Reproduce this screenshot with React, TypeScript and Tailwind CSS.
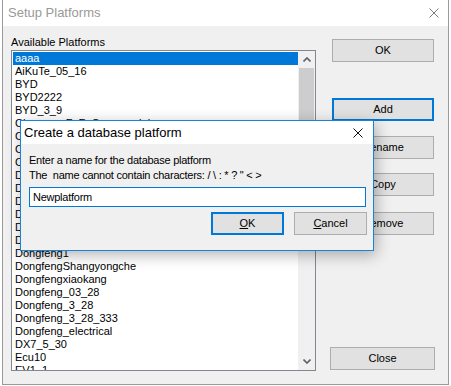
const platforms = [
  "aaaa",
  "AiKuTe_05_16",
  "BYD",
  "BYD2222",
  "BYD_3_9",
  "Changan_F_F_Commercial",
  "Chery",
  "Chery_QQ",
  "Chery_test",
  "DFLZ",
  "DFM",
  "Demo",
  "Dongfeng",
  "Dongfeng0",
  "Dongfeng01",
  "Dongfeng1",
  "DongfengShangyongche",
  "Dongfengxiaokang",
  "Dongfeng_03_28",
  "Dongfeng_3_28",
  "Dongfeng_3_28_333",
  "Dongfeng_electrical",
  "DX7_5_30",
  "Ecu10",
  "EV1_1",
];

function CloseGlyph({ color }: { color: string }) {
  return (
    <svg width="10" height="10" viewBox="0 0 10 10">
      <path d="M0.5 0.5 L9.5 9.5 M9.5 0.5 L0.5 9.5" stroke={color} strokeWidth="1" fill="none" />
    </svg>
  );
}

function Chevron({ up }: { up?: boolean }) {
  return (
    <svg width="8" height="5" viewBox="0 0 8 5">
      <path
        d={up ? "M0.5 4.5 L4 1 L7.5 4.5" : "M0.5 0.5 L4 4 L7.5 0.5"}
        stroke="#606060"
        strokeWidth="1.6"
        fill="none"
      />
    </svg>
  );
}

function WinButton({ label, focused, className = "" }: { label: string; focused?: boolean; className?: string }) {
  return (
    <div
      className={`flex h-[23px] w-[102px] items-center justify-center bg-[#e1e1e1] text-[11px] text-black ${
        focused ? "border-2 border-[#0078d7]" : "border border-[#adadad]"
      } ${className}`}
    >
      {label}
    </div>
  );
}

export default function App() {
  return (
    <div
      className="relative h-[386px] w-[451px] overflow-hidden bg-white pl-[2px]"
      style={{ fontFamily: '"Liberation Sans", Arial, sans-serif' }}
    >
      <div className="flex h-[385px] w-[447px] flex-col border-x border-b border-[#9a9a9a]">
        {/* title bar */}
        <div className="flex h-[26px] items-center justify-between bg-white pl-[5px] pr-[9px]">
          <span className="text-[13px] text-[#999999]">Setup Platforms</span>
          <CloseGlyph color="#7a7a7a" />
        </div>

        {/* client */}
        <div className="flex flex-1 bg-[#f0f0f0] pl-[8px]">
          <div className="flex flex-col pt-[10px]">
            <div className="mb-[1px] h-[13px] text-[11px] leading-[13px] text-black">Available Platforms</div>
            <div className="flex h-[321px] w-[305px] overflow-hidden border border-[#828790] bg-white">
              <div className="flex-1 overflow-hidden pl-[1px] pt-[1px]">
                {platforms.map((p, i) => (
                  <div
                    key={p}
                    className={`h-[13px] whitespace-nowrap pl-[2px] text-[11px] leading-[13px] ${
                      i === 0 ? "bg-[#0078d7] text-white" : "text-black"
                    }`}
                  >
                    {p}
                  </div>
                ))}
              </div>
              <div className="flex w-[17px] flex-col bg-[#f0f0f0]">
                <div className="flex h-[17px] items-center justify-center">
                  <Chevron up />
                </div>
                <div className="mx-[1px] h-[132px] bg-[#cdcdcd]" />
                <div className="flex-1" />
                <div className="flex h-[17px] items-center justify-center">
                  <Chevron />
                </div>
              </div>
            </div>
          </div>

          <div className="flex flex-col pl-[14px] pt-[13px]">
            <WinButton label="OK" className="ml-[2px]" />
            <WinButton label="Add" focused className="ml-[2px] mt-[36px]" />
            <WinButton label="Rename" className="ml-[2px] mt-[15px]" />
            <WinButton label="Copy" className="ml-[2px] mt-[14px]" />
            <WinButton label="Remove" className="ml-[2px] mt-[16px]" />
            <WinButton label="Close" className="mt-[112px] w-[105px]" />
          </div>
        </div>
      </div>

      {/* modal dialog */}
      <div className="absolute left-[20px] top-[120px] flex h-[131px] w-[354px] flex-col border border-[#1883d7] bg-[#f0f0f0] shadow-[2px_4px_14px_rgba(0,0,0,0.3)]">
        <div className="flex h-[23px] items-center justify-between bg-white pl-[3px] pr-[10px]">
          <span className="text-[13px] text-black">Create a database platform</span>
          <CloseGlyph color="#111111" />
        </div>
        <div className="flex flex-col pl-[8px] pt-[9px] text-[11px] leading-[15px] tracking-[-0.25px] text-black">
          <div>Enter a name for the database platform</div>
          <div>The&nbsp; name cannot contain characters: / \ : * ? " &lt; &gt;</div>
          <div className="mt-[4px] flex h-[20px] w-[337px] items-center border border-[#0078d7] bg-white pl-[3px]">
            Newplatform
          </div>
          <div className="mt-[5px] flex gap-[10px] pl-[182px] tracking-normal">
            <div className="flex h-[23px] w-[73px] items-center justify-center border-2 border-[#0078d7] bg-[#e1e1e1]">
              <span>
                <span className="underline">O</span>K
              </span>
            </div>
            <div className="flex h-[23px] w-[73px] items-center justify-center border border-[#adadad] bg-[#e1e1e1]">
              <span>
                <span className="underline">C</span>ancel
              </span>
            </div>
          </div>
        </div>
      </div>
    </div>
  );
}
